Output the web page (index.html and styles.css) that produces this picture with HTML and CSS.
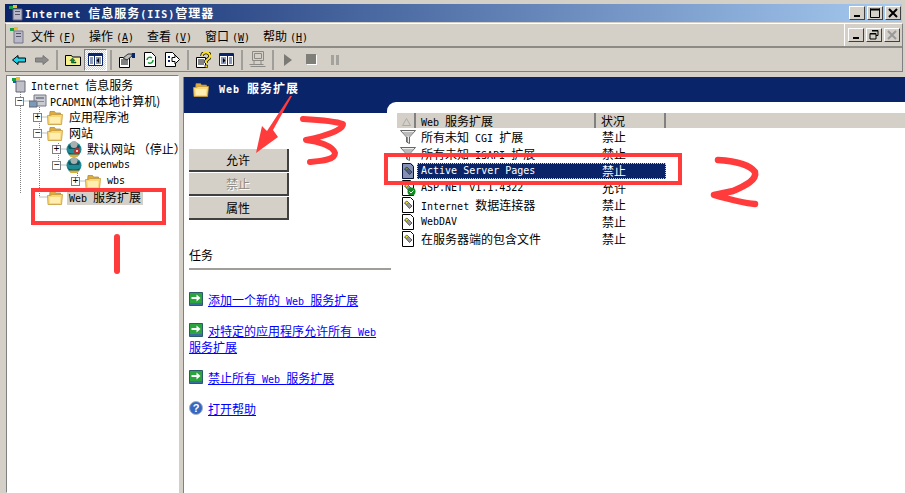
FILE: index.html
```html
<!DOCTYPE html>
<html lang="en">
<head>
    <meta charset="UTF-8">
    <meta name="viewport" content="width=device-width, initial-scale=1.0">
    <title>Internet 信息服务(IIS)管理器</title>
    <link rel="stylesheet" href="styles.css">
</head>
<body>
    <!-- Shared icons -->
    <svg class="defs" width="0" height="0">
        <symbol id="i-folder" viewBox="0 0 16 16">
            <path d="M3 2.500h4.500l1 1.500h5v4H2.500z" fill="#e0ac40" stroke="#a88230" stroke-width=".7"/>
            <path d="M1 15.500.5 6.500h3L5 5.500h10.500l-1 10z" fill="#f8d878" stroke="#c49a3c" stroke-width=".8"/>
            <path d="M2.500 8h11l-.5 6H3z" fill="#ffeeb0"/>
        </symbol>
        <symbol id="i-ext" viewBox="0 0 16 16">
            <path d="M2.500 .5h8l3 3v12h-11z" fill="#fff" stroke="#000"/>
            <path d="M4.500 6 7 4l5 5-2.500 2.500z" fill="#9a9a9a" stroke="#333" stroke-width=".7"/>
            <path d="M5 5.500 7 4l1.500 1.500-2 2z" fill="#e8e020" stroke="#555" stroke-width=".5"/>
        </symbol>
        <symbol id="i-funnel" viewBox="0 0 16 16">
            <path d="M.5 1.500h15l-6 6.500v6.500l-3-1.500V8z" fill="#eee" stroke="#666"/>
            <path d="M2.500 3h11l-4 4.500h-3z" fill="#bbb"/>
            <path d="M7.500 8v5" stroke="#888"/>
        </symbol>
        <symbol id="i-go" viewBox="0 0 14 14">
            <path d="M.5.500h13v13H.5z" fill="#2aa43c" stroke="#2c5a6a"/>
            <path d="M1 11h12v2H1z" fill="#3b6ea0"/>
            <path d="M2.500 5h5V2.500L11.500 6l-4 3.500V7h-5z" fill="#fff"/>
        </symbol>
        <symbol id="i-globe" viewBox="0 0 16 16">
            <circle cx="8" cy="8.500" r="7.500" fill="#1e8a94"/>
            <path d="M2 5c3-2 8-2 12 0l-1 3H3zM2 11c3 2 9 2 12 0l-2 3.500H4z" fill="#0e5660"/>
            <circle cx="8" cy="3.500" r="3.500" fill="#a8b0b0"/>
            <path d="M3 13.500h10l-1.500 2.500h-7z" fill="#d8b040"/>
        </symbol>
    </svg>

    <div class="window">
        <div class="titlebar">
            <svg class="title-icon" width="16" height="16" viewBox="0 0 16 16">
                <path d="M5 4h9v11H5z" fill="#b8b8c8" stroke="#667"/>
                <path d="M7 6h5v1H7zM7 9h5v1H7z" fill="#556"/>
                <path d="M1 1h4v3H1z" fill="#18a048"/><path d="M5 0h4v3H5z" fill="#e8c020"/>
            </svg>
            <span class="title-text"><span class="en">Internet </span>信息服务<span class="en">(IIS)</span>管理器</span>
            <div class="win-buttons">
                <button class="cap-btn"><svg width="8" height="8"><path d="M1 6h6v2H1z"/></svg></button>
                <button class="cap-btn"><svg width="10" height="10"><path d="M.5 1.500h9v8h-9zM0 0h10v2H0z" fill="none" stroke="#000"/></svg></button>
                <button class="cap-btn cap-close"><svg width="10" height="10"><path d="M1 1l8 8M9 1l-8 8" stroke="#000" stroke-width="2"/></svg></button>
            </div>
        </div>

        <div class="bars">
            <div class="menubar">
                <svg class="menu-icon" width="16" height="17" viewBox="0 0 16 17">
                    <path d="M5 4h9v12H5z" fill="#b8b8c8" stroke="#778"/>
                    <path d="M7 6h5v1H7zM7 9h5v1H7z" fill="#556"/>
                    <path d="M1 1h4v3H1z" fill="#18a048"/><path d="M5 0h4v3H5z" fill="#e8c020"/>
                </svg>
                <div class="menu-item">文件<span class="en">(<u>F</u>)</span></div>
                <div class="menu-item">操作<span class="en">(<u>A</u>)</span></div>
                <div class="menu-item">查看<span class="en">(<u>V</u>)</span></div>
                <div class="menu-item">窗口<span class="en">(<u>W</u>)</span></div>
                <div class="menu-item">帮助<span class="en">(<u>H</u>)</span></div>
                <div class="mdi-buttons">
                    <button class="cap-btn"><svg width="8" height="8"><path d="M1 6h6v2H1z"/></svg></button>
                    <button class="cap-btn"><svg width="10" height="10"><path d="M3 .500h6v5H7M1 3.500h6v5.500H1zM3 1h6M1 4h6" fill="none" stroke="#000"/></svg></button>
                    <button class="cap-btn cap-off"><svg width="10" height="10"><path d="M1 1l8 8M9 1l-8 8" stroke="#999" stroke-width="2"/></svg></button>
                </div>
            </div>
            <div class="toolbar">
                <div class="tool"><svg width="14" height="10"><path d="M.5 5 6 .500V3h7.500v4H6v2.500z" fill="#19d4e8" stroke="#000"/></svg></div>
                <div class="tool"><svg width="14" height="10"><path d="M13.500 5 8 .500V3H.5v4H8v2.500z" fill="#8c8c8c" stroke="#777"/></svg></div>
                <div class="tool-sep"></div>
                <div class="tool"><svg width="16" height="13"><path d="M.5 2.500h6l1 1.500h8v8.500H.5z" fill="#f4f08c" stroke="#000"/><path d="M7.500 5 5 7.500h1.500V10H11V9H8.500V7.500H10z" fill="#0a8a3c" stroke="#000" stroke-width=".4"/></svg></div>
                <div class="tool tool-on"><svg width="15" height="13"><path d="M.5.500h14v12H.5z" fill="#fff" stroke="#0a246a"/><path d="M1 1h13v2H1zM6 3h1v9H6z" fill="#0a246a"/><path d="M2 4h3v7H2zM8 4h5v7H8z" fill="#8c98b8"/><path d="M11 5v5L8.500 7.500z" fill="#000"/></svg></div>
                <div class="tool-sep"></div>
                <div class="tool"><svg width="16" height="16"><path d="M.5 5.500h10v10H.5z" fill="#fff" stroke="#000"/><path d="M2 8h7M2 10h7M2 12h7" stroke="#000"/><path d="M4 6l5-4h4v2l-5 4z" fill="#bbb" stroke="#333"/><path d="M13 1h3v5h-3z" fill="#0a246a"/></svg></div>
                <div class="tool"><svg width="12" height="15"><path d="M.5.500h7l4 4v10H.5z" fill="#fff" stroke="#000"/><path d="M3 8a3 3 0 0 1 5-2M9 8a3 3 0 0 1-5 2.500" fill="none" stroke="#0a9a2c" stroke-width="1.400"/></svg></div>
                <div class="tool"><svg width="15" height="15"><path d="M.5.500h7l3 3v11H.5z" fill="#fff" stroke="#000"/><path d="M3 4h2v2H3zM3 8h2v2H3z" fill="#0a246a"/><path d="M7 5.500h3V3l4.500 4.500L10 12V9.500H7z" fill="#fff" stroke="#000"/></svg></div>
                <div class="tool-sep"></div>
                <div class="tool"><svg width="15" height="16"><path d="M.5 5.500h9v10h-9z" fill="#fff" stroke="#000"/><path d="M2 8h6M2 10h6M2 12h6" stroke="#000"/><path d="M6 4a4 3.500 0 1 1 6 3l-2 2v2" fill="none" stroke="#000" stroke-width="3.400"/><path d="M6 4a4 3.500 0 1 1 6 3l-2 2v2" fill="none" stroke="#f8e020" stroke-width="2"/><path d="M9 13h2.500v2.500H9z" fill="#f8e020" stroke="#000" stroke-width=".6"/></svg></div>
                <div class="tool"><svg width="15" height="13"><path d="M.5.500h14v12H.5z" fill="#fff" stroke="#0a246a"/><path d="M1 1h13v2H1zM8 3h1v9H8z" fill="#0a246a"/><path d="M2 4h5v7H2zM10 4h3v7h-3z" fill="#8c98b8"/><path d="M4 5v5l2.500-2.500z" fill="#000"/></svg></div>
                <div class="tool-sep"></div>
                <div class="tool"><svg width="18" height="17" fill="none" stroke="#8c8a84"><path d="M3.500.500h11v9h-11zM5.500 2.500h7v5h-7zM.5 13.500h14M1.500 15.500h15M5 10v3M12 10v3"/></svg></div>
                <div class="tool-sep"></div>
                <div class="tool"><svg width="9" height="12"><path d="M0 0l8 6-8 6z" fill="#7c7a74"/></svg></div>
                <div class="tool"><svg width="11" height="11"><path d="M0 0h10v10H0z" fill="#807e78"/><path d="M10 1h1v10H1v-1h9z" fill="#fff"/></svg></div>
                <div class="tool"><svg width="8" height="10"><path d="M0 0h3v10H0zM5 0h3v10H5z" fill="#a4a29c"/></svg></div>
            </div>
        </div>

        <div class="panes">
            <!-- Tree on the left -->
            <div class="tree">
                <svg class="tree-lines" width="170" height="130">
                    <path d="M13.500 16V117M13.500 25h9M32.500 27V120M32.500 41h9M32.500 57h9M32.500 121h9M51.500 67V91M51.500 73h9M51.500 89h9M70.500 91V105M70.500 105h9" fill="none" stroke="#808080" stroke-dasharray="1 1"/>
                </svg>
                <div class="tree-row">
                    <svg class="tree-icon" width="16" height="16" viewBox="0 0 16 16"><path d="M5 4h9v11H5z" fill="#c0c0c8" stroke="#667"/><path d="M1 1h4v3H1z" fill="#18a048"/><path d="M5 0h4v3H5z" fill="#e8c020"/><path d="M2 4h3v2H2z" fill="#1860c0"/></svg>
                    <span class="tree-label"><span class="en">Internet </span>信息服务</span>
                </div>
                <div class="tree-row lvl1">
                    <span class="expander">−</span>
                    <svg class="tree-icon" width="18" height="16" viewBox="0 0 18 16"><path d="M5 2h12v11H5z" fill="#c8ccd0" stroke="#778"/><path d="M0 8h8v6H0z" fill="#7a9ab8" stroke="#667"/><path d="M7 4h8v2H7zM7 8h8v1H7z" fill="#889"/></svg>
                    <span class="tree-label"><span class="en">PCADMIN</span>(本地计算机)</span>
                </div>
                <div class="tree-row lvl2">
                    <span class="expander">+</span>
                    <svg class="tree-icon" width="16" height="16"><use href="#i-folder"/></svg>
                    <span class="tree-label">应用程序池</span>
                </div>
                <div class="tree-row lvl2">
                    <span class="expander">−</span>
                    <svg class="tree-icon" width="16" height="16"><use href="#i-folder"/></svg>
                    <span class="tree-label">网站</span>
                </div>
                <div class="tree-row lvl3">
                    <span class="expander">+</span>
                    <svg class="tree-icon" width="16" height="16"><use href="#i-globe"/><circle cx="11" cy="10" r="3" fill="#c03030"/><circle cx="11" cy="10" r="1" fill="#fff"/></svg>
                    <span class="tree-label">默认网站 （停止）</span>
                </div>
                <div class="tree-row lvl3">
                    <span class="expander">−</span>
                    <svg class="tree-icon" width="16" height="16"><use href="#i-globe"/></svg>
                    <span class="tree-label en">openwbs</span>
                </div>
                <div class="tree-row lvl4">
                    <span class="expander">+</span>
                    <svg class="tree-icon" width="16" height="16"><use href="#i-folder"/></svg>
                    <span class="tree-label en">wbs</span>
                </div>
                <div class="tree-row lvl2 no-expander">
                    <svg class="tree-icon" width="16" height="16"><use href="#i-folder"/></svg>
                    <span class="tree-label tree-selected"><span class="en">Web </span>服务扩展</span>
                </div>
            </div>

            <!-- Details on the right -->
            <div class="details">
                <div class="banner">
                    <svg width="16" height="16"><use href="#i-folder"/></svg>
                    <span class="banner-title"><span class="en">Web </span>服务扩展</span>
                </div>
                <div class="details-body">
                    <div class="side">
                        <div class="side-cap"></div>
                        <div class="side-buttons">
                            <button class="act-btn">允许</button>
                            <button class="act-btn act-off">禁止</button>
                            <button class="act-btn">属性</button>
                        </div>
                        <div class="tasks-title">任务</div>
                        <div class="task"><svg width="14" height="14"><use href="#i-go"/></svg><a href="#">添加一个新的<span class="en"> Web </span>服务扩展</a></div>
                        <div class="task"><svg width="14" height="14"><use href="#i-go"/></svg><a href="#">对特定的应用程序允许所有<span class="en"> Web </span><br>服务扩展</a></div>
                        <div class="task"><svg width="14" height="14"><use href="#i-go"/></svg><a href="#">禁止所有<span class="en"> Web </span>服务扩展</a></div>
                        <div class="task"><svg width="14" height="14" viewBox="0 0 14 14"><circle cx="7" cy="7" r="6.500" fill="#3468c0" stroke="#a8b0c0"/><text x="7" y="11" text-anchor="middle" class="help-mark">?</text></svg><a href="#">打开帮助</a></div>
                    </div>
                    <div class="list-wrap">
                        <div class="list">
                            <div class="list-head">
                                <div class="col-sort"><svg width="9" height="8"><path d="M4.500 .5 8.500 7.500H.5z" fill="none" stroke="#aaa"/></svg></div>
                                <div class="col-name"><span class="en">Web </span>服务扩展</div>
                                <div class="col-state">状况</div>
                                <div class="col-rest"></div>
                            </div>
                            <div class="list-row">
                                <svg width="16" height="16"><use href="#i-funnel"/></svg>
                                <span class="row-name">所有未知<span class="en"> CGI </span>扩展</span><span>禁止</span>
                            </div>
                            <div class="list-row">
                                <svg width="16" height="16"><use href="#i-funnel"/></svg>
                                <span class="row-name">所有未知<span class="en"> ISAPI </span>扩展</span><span>禁止</span>
                            </div>
                            <div class="list-row row-selected">
                                <svg width="16" height="16"><use href="#i-ext"/><path d="M2 0h9l3 3v13H2z" fill="#0a246a" opacity=".5"/></svg>
                                <span class="row-text"><span class="row-name en">Active Server Pages</span><span>禁止</span></span>
                            </div>
                            <div class="list-row">
                                <svg width="16" height="16"><use href="#i-ext"/><circle cx="11.500" cy="11.500" r="4" fill="#108a20"/><path d="M9.500 11.500l1.500 1.500 2.500-2.500" fill="none" stroke="#fff"/></svg>
                                <span class="row-name en">ASP.NET v1.1.4322</span><span>允许</span>
                            </div>
                            <div class="list-row">
                                <svg width="16" height="16"><use href="#i-ext"/></svg>
                                <span class="row-name"><span class="en">Internet </span>数据连接器</span><span>禁止</span>
                            </div>
                            <div class="list-row">
                                <svg width="16" height="16"><use href="#i-ext"/></svg>
                                <span class="row-name en">WebDAV</span><span>禁止</span>
                            </div>
                            <div class="list-row">
                                <svg width="16" height="16"><use href="#i-ext"/></svg>
                                <span class="row-name">在服务器端的包含文件</span><span>禁止</span>
                            </div>
                        </div>
                    </div>
                </div>
            </div>
        </div>
    </div>

    <!-- Red marks drawn on top of the screenshot -->
    <svg class="marks" width="905" height="493" fill="none" stroke="#ff3b3b">
        <rect x="33" y="190" width="131" height="33" stroke-width="4"/>
        <rect x="386" y="155" width="294" height="28" stroke-width="4"/>
        <path d="M117 237V271" stroke-width="6" stroke-linecap="round"/>
        <path d="M718 160C735 161 750 165 755 172C757 180 745 186 733 191L714 195C728 199 742 203 755 204" stroke-width="6.500" stroke-linecap="round" stroke-linejoin="round"/>
        <path d="M303 119C320 120 335 121 343 124C344 130 325 136 306 140C318 141 333 146 335 153C335 160 322 161 310 162" stroke-width="6" stroke-linecap="round" stroke-linejoin="round"/>
        <path d="M292 96 273 130 278 137 256 153 262 126 267 131 290 96z" fill="#ff3b3b" stroke="none"/>
    </svg>
</body>
</html>
```

FILE: styles.css
```css
/* General page */
* {
    box-sizing: border-box;
}

body {
    margin: 0;
    width: 905px;
    height: 493px;
    overflow: hidden;
    position: relative;
    background-color: #d4d0c8;
    font-family: "Noto Sans CJK SC", sans-serif;
    font-size: 12px;
    line-height: 16px;
    color: #000;
}

.defs {
    position: absolute;
}

/* Latin text runs 6px per character, next to 12px CJK */
.en {
    font-family: "DejaVu Sans Mono", monospace;
    font-size: 10px;
    line-height: 1;
}

.window {
    height: 100%;
    display: flex;
    flex-direction: column;
    padding: 4px 0 0 5px;
}

/* Title bar */
.titlebar {
    height: 18px;
    margin-right: 3px;
    display: flex;
    align-items: center;
    background: linear-gradient(to right, #0a246a, #a6caf0);
    padding: 0 1px 0 3px;
}

.title-icon {
    flex: none;
}

.title-text {
    margin-left: 1px;
    color: #fff;
    font-weight: bold;
    letter-spacing: 1px;
}

.win-buttons,
.mdi-buttons {
    margin-left: auto;
    display: flex;
    gap: 2px;
}

.cap-btn {
    width: 16px;
    height: 14px;
    padding: 0;
    background: #d4d0c8;
    border: 1px solid;
    border-color: #fff #404040 #404040 #fff;
    display: flex;
    align-items: center;
    justify-content: center;
}

/* Menu and tool bars */
.bars {
    margin: 1px 2px 0 0;
    border: 1px solid;
    border-color: #fff #808080 #808080 #808080;
}

.menubar {
    height: 24px;
    display: flex;
    align-items: center;
    padding-left: 3px;
    border-bottom: 2px solid #8c8a84;
}

.menu-icon {
    flex: none;
    margin-right: 6px;
}

.menu-item {
    width: 58px;
    padding-top: 2px;
    white-space: nowrap;
}

.menu-item .en {
    margin-left: 3px;
}

.mdi-buttons {
    height: 100%;
    align-items: center;
    padding: 0 2px 0 3px;
    border-left: 1px solid #fff;
}

.toolbar {
    height: 23px;
    display: flex;
    align-items: center;
    padding-left: 1px;
}

.tool {
    width: 23px;
    height: 22px;
    display: flex;
    align-items: center;
    justify-content: center;
}

.tool-on {
    border: 1px solid;
    border-color: #808080 #fff #fff #808080;
    background: repeating-conic-gradient(#fff 0 25%, #d4d0c8 0 50%) 0 0 / 2px 2px;
}

.tool-sep {
    width: 8px;
    height: 20px;
    background: linear-gradient(#a09e98, #a09e98) center / 2px 100% no-repeat;
}

/* Panes */
.panes {
    flex: 1;
    display: flex;
    margin-top: 3px;
    min-height: 0;
}

.tree {
    position: relative;
    width: 173px;
    flex: none;
    margin-left: 1px;
    padding: 1px 0 0 4px;
    background: #fff;
    border: 1px solid;
    border-color: #808080 #fff #fff #808080;
}

.tree-lines {
    position: absolute;
    top: 0;
    left: 0;
}

.tree-row {
    position: relative;
    height: 16px;
    display: flex;
    align-items: center;
    white-space: nowrap;
}

.lvl1 {
    padding-left: 4px;
}

.lvl2 {
    padding-left: 22px;
}

.lvl3 {
    padding-left: 41px;
}

.lvl4 {
    padding-left: 60px;
}

.tree-row.no-expander {
    padding-left: 36px;
}

.expander {
    width: 9px;
    height: 9px;
    flex: none;
    margin-right: 5px;
    border: 1px solid #808080;
    background: #fff;
    font-family: "Liberation Mono", monospace;
    font-size: 10px;
    line-height: 7px;
    text-align: center;
}

.tree-icon {
    flex: none;
}

.tree-label {
    margin-left: 4px;
}

.lvl1 .tree-label {
    margin-left: 3px;
}

.lvl2 .tree-label {
    margin-left: 6px;
}

.lvl3 .tree-label {
    margin-left: 5px;
}

.lvl3 .tree-label.en,
.lvl4 .tree-label.en {
    margin-left: 6px;
}

.lvl2 .tree-selected {
    margin-left: 4px;
    padding: 0 2px;
    background: #d4d0c8;
}

.details {
    flex: 1;
    margin: 2px 0 0 4px;
    background: #fff;
    border-left: 1px solid #808080;
    display: flex;
    flex-direction: column;
    min-width: 0;
}

.banner {
    height: 25px;
    flex: none;
    background: #0a246a;
    display: flex;
    align-items: flex-start;
    padding: 4px 0 0 9px;
}

.banner-title {
    margin: -1px 0 0 10px;
    color: #fff;
    font-weight: bold;
    letter-spacing: 1px;
}

.details-body {
    flex: 1;
    display: flex;
}

.side {
    width: 203px;
    flex: none;
}

.side-cap {
    height: 11px;
    background: #0a246a;
}

.side-buttons {
    margin: 36px 0 0 5px;
    display: flex;
    flex-direction: column;
    gap: 1px;
    width: 100px;
}

.act-btn {
    height: 23px;
    padding: 0;
    font: inherit;
    background: #d4d0c8;
    border: solid #404040;
    border-width: 0 2px 2px 0;
}

.act-off {
    color: #8c8a84;
    text-shadow: 1px 1px 0 #fff;
}

/* The rule under the heading runs a little way past the column */
.tasks-title {
    position: relative;
    z-index: 1;
    margin: 27px -4px 0 5px;
    height: 23px;
    border-bottom: 2px solid #a09e98;
}

.task {
    margin: 15px 0 0 5px;
}

.tasks-title + .task {
    margin-top: 22px;
}

.task svg {
    vertical-align: top;
    margin-right: 5px;
}

.task a {
    color: #0000ff;
}

.help-mark {
    fill: #fff;
    font-family: "Liberation Sans", sans-serif;
    font-size: 11px;
    font-weight: bold;
}

/* Extension list */
.list-wrap {
    flex: 1;
    background: #0a246a;
    min-width: 0;
}

.list {
    height: 100%;
    background: #fff;
    border-top-left-radius: 9px;
    padding: 11px 0 0 10px;
}

.list-head {
    height: 15px;
    display: flex;
    background: #d4d0c8;
    line-height: 15px;
}

.list-head > div {
    border-right: 2px solid #808080;
    padding-left: 5px;
}

.list-head .col-sort {
    width: 19px;
}

.col-name {
    width: 180px;
}

.col-state {
    width: 70px;
}

.list-head .col-rest {
    flex: 1;
    border-right: 0;
}

.list-row {
    height: 17px;
    display: flex;
    align-items: center;
    padding-left: 3px;
    white-space: nowrap;
}

.row-name {
    width: 181px;
    margin-left: 5px;
}

.row-text {
    display: flex;
    align-items: center;
}

.row-selected .row-text {
    margin-left: 1px;
    width: 249px;
    height: 16px;
    padding-left: 4px;
    background: #0a246a;
    color: #fff;
    outline: 1px dotted #f0d080;
    outline-offset: -1px;
}

.row-selected .row-name {
    margin-left: 0;
}

/* Annotation overlay */
.marks {
    position: absolute;
    top: 0;
    left: 0;
    pointer-events: none;
}
```
